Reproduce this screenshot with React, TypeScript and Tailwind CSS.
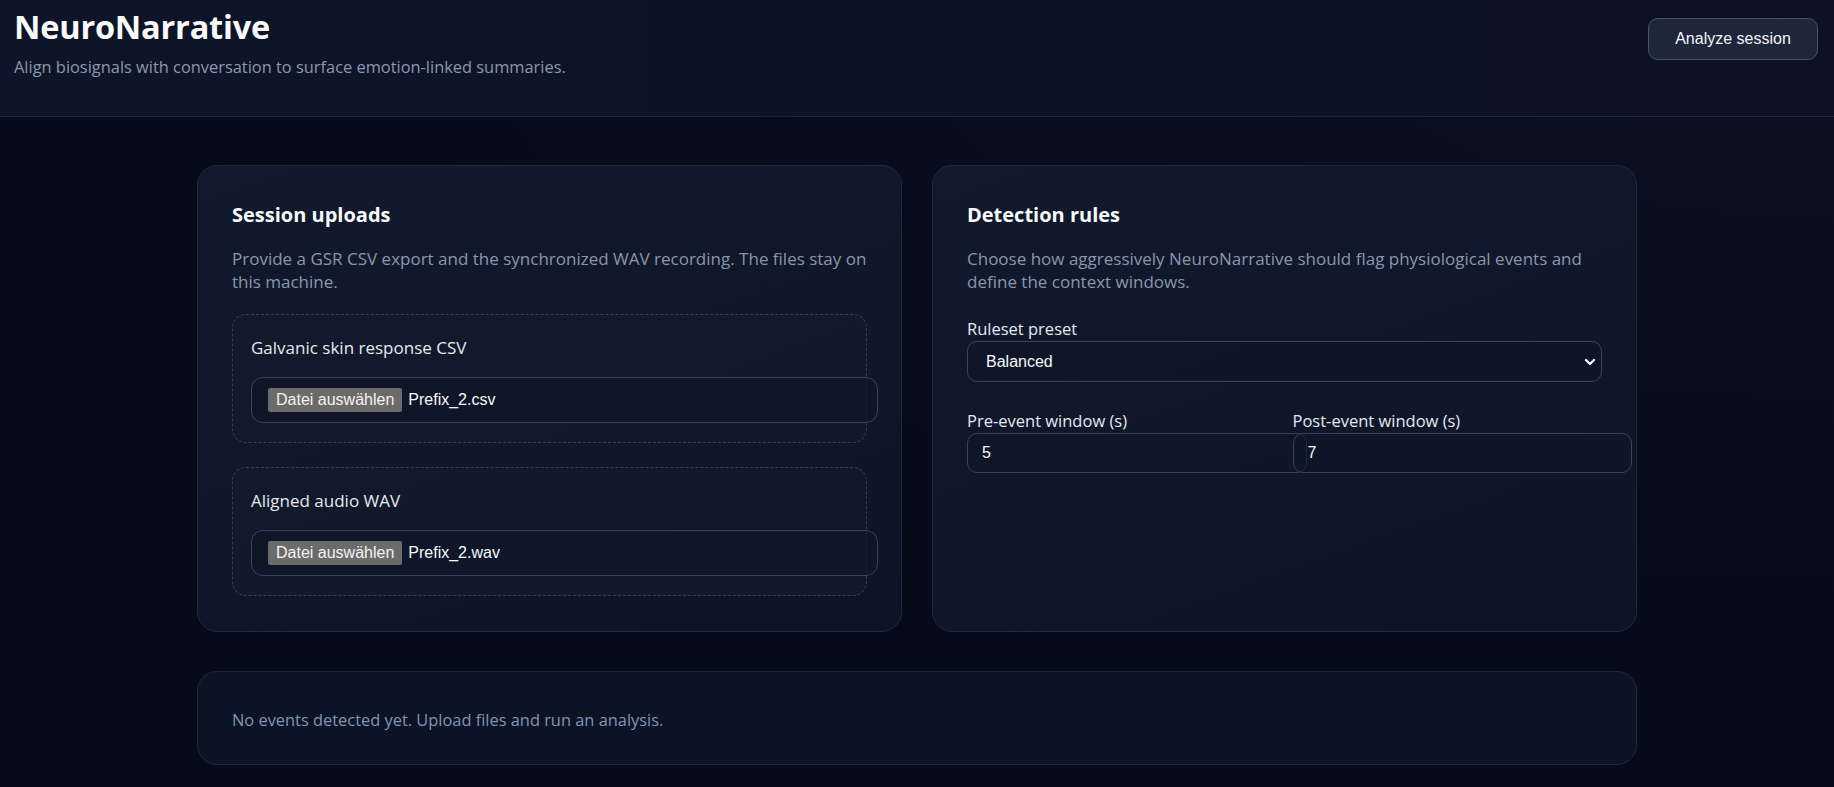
import React from "react";

function FakeFile({ name }: { name: string }) {
  return (
    <div className="box-content w-full h-[24px] pl-[16px] pr-[12px] py-[10px] rounded-[12px] border border-[#3a4457] bg-[#0e1526]/70 flex items-center font-['Liberation_Sans',Arial,sans-serif] text-[16px] text-[#f8fafc]">
      <span className="h-[24px] px-[8px] flex items-center bg-[#6b6b6b] text-[#f3f3f3] rounded-[2px] leading-none">
        Datei auswählen
      </span>
      <span className="ml-[6px]">{name}</span>
    </div>
  );
}

function UploadBox({ label, file }: { label: string; file: string }) {
  return (
    <div className="rounded-[14px] border border-dashed border-[#354054] bg-[#111a2c]/80 px-[18px] pt-[20px] pb-[19px]">
      <div className="text-[17px] leading-[26px] text-[#e5e9f0]">{label}</div>
      <div className="mt-[16px]">
        <FakeFile name={file} />
      </div>
    </div>
  );
}

function NumInput({ value }: { value: string }) {
  return (
    <div className="box-content w-full h-[18px] px-[14px] py-[10px] rounded-[10px] border border-[#3a4457] bg-[#0e1526]/60 flex items-center font-['Liberation_Sans',Arial,sans-serif] text-[16px] text-[#f8fafc]">
      {value}
    </div>
  );
}

export default function App() {
  return (
    <div className="min-h-screen bg-[radial-gradient(ellipse_at_top_right,#0b1122_0%,#060b1a_60%)] font-['Open_Sans','Noto_Sans',sans-serif] text-[#e2e8f0]">
      <header className="h-[117px] border-b border-[#1e2739] bg-[linear-gradient(90deg,#0e1528,#0c1224)] pl-[14px] pr-[16px] flex items-start justify-between">
        <div className="pt-[6px]">
          <h1 className="text-[32.5px] leading-[41px] font-bold text-[#f8fafc] tracking-[-0.2px]">NeuroNarrative</h1>
          <p className="mt-[8px] text-[16.4px] leading-[24px] text-[#8c98ad]">
            Align biosignals with conversation to surface emotion-linked summaries.
          </p>
        </div>
        <button className="mt-[18px] h-[42px] w-[170px] rounded-[10px] border border-[#46536a] bg-[#1d2739] text-[16px] text-[#f1f5f9] font-['Liberation_Sans',Arial,sans-serif]">
          Analyze session
        </button>
      </header>

      <main className="mx-auto max-w-[1440px] pt-[48px] pb-[22px]">
        <div className="grid grid-cols-2 gap-[30px]">
          <section className="rounded-[20px] border border-[#1e293b] bg-[linear-gradient(160deg,#111a2d,#0d1426)] px-[34px] pt-[35px] pb-[35px]">
            <h2 className="text-[20px] leading-[28px] font-bold text-[#f8fafc]">Session uploads</h2>
            <p className="mt-[18px] text-[17px] leading-[23px] text-[#8a97ab]">
              Provide a GSR CSV export and the synchronized WAV recording. The files stay on this machine.
            </p>
            <div className="mt-[21px] flex flex-col gap-[24px]">
              <UploadBox label="Galvanic skin response CSV" file="Prefix_2.csv" />
              <UploadBox label="Aligned audio WAV" file="Prefix_2.wav" />
            </div>
          </section>

          <section className="rounded-[20px] border border-[#1e293b] bg-[linear-gradient(160deg,#111a2d,#0d1426)] px-[34px] pt-[35px] pb-[35px]">
            <h2 className="text-[20px] leading-[28px] font-bold text-[#f8fafc]">Detection rules</h2>
            <p className="mt-[18px] text-[17px] leading-[23px] text-[#8a97ab]">
              Choose how aggressively NeuroNarrative should flag physiological events and define the context windows.
            </p>
            <div className="mt-[24px]">
              <div className="text-[16.5px] leading-[24px] text-[#e5e9f0]">Ruleset preset</div>
              <div className="h-[41px] rounded-[10px] border border-[#3a4457] bg-[#0e1526]/70 flex items-center justify-between pl-[18px] pr-[5px] font-['Liberation_Sans',Arial,sans-serif] text-[16px] text-[#f8fafc]">
                <span>Balanced</span>
                <svg width="12" height="8" viewBox="0 0 12 8">
                  <path d="M2 2 L6 6 L10 2" fill="none" stroke="#ffffff" strokeWidth="2.2" strokeLinecap="round" strokeLinejoin="round" />
                </svg>
              </div>
            </div>
            <div className="mt-[27px] grid grid-cols-2 gap-[16px]">
              <div>
                <div className="text-[16.5px] leading-[24px] text-[#e5e9f0]">Pre-event window (s)</div>
                <NumInput value="5" />
              </div>
              <div>
                <div className="text-[16.5px] leading-[24px] text-[#e5e9f0]">Post-event window (s)</div>
                <NumInput value="7" />
              </div>
            </div>
          </section>
        </div>

        <section className="mt-[39px] h-[94px] rounded-[20px] border border-[#1e293b] bg-[#0c1324] px-[34px] pt-[36px]">
          <p className="text-[16.4px] leading-[24px] text-[#7f95b8]">
            No events detected yet. Upload files and run an analysis.
          </p>
        </section>
      </main>
    </div>
  );
}
